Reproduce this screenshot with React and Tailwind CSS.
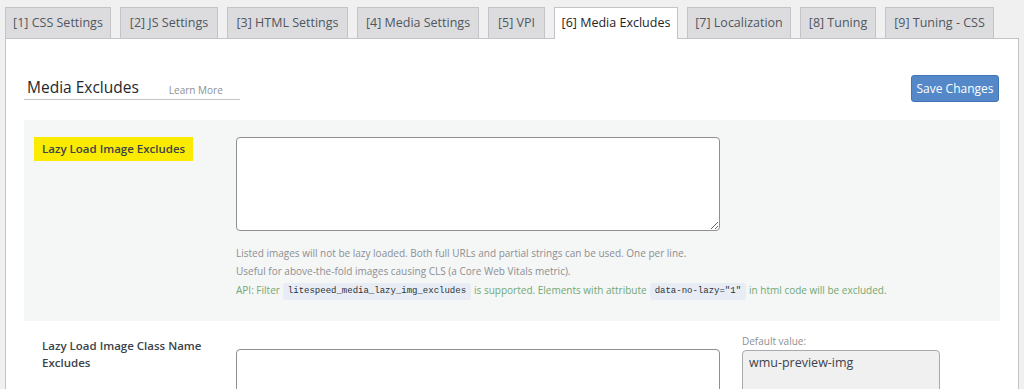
import React from "react";

const tabs = [
  { label: "[1] CSS Settings", w: "w-[106px]" },
  { label: "[2] JS Settings", w: "w-[98px]" },
  { label: "[3] HTML Settings", w: "w-[121px]" },
  { label: "[4] Media Settings", w: "w-[122px]" },
  { label: "[5] VPI", w: "w-[57px]" },
  { label: "[6] Media Excludes", w: "w-[124px]", active: true },
  { label: "[7] Localization", w: "w-[104px]" },
  { label: "[8] Tuning", w: "w-[76px]" },
  { label: "[9] Tuning - CSS", w: "w-[109px]" },
];

function Code({ children }) {
  return (
    <code className="mx-[3px] inline-block rounded-[3px] bg-[#e8edf5] px-[5px] py-[2px] align-middle font-['Liberation_Mono',monospace] text-[9px] leading-[13px] text-[#2c3338]">
      {children}
    </code>
  );
}

export default function App() {
  return (
    <div className="h-[389px] overflow-hidden bg-[#f0f0f1] px-[5px] pt-[7px] font-['Open_Sans',sans-serif]">
      <div className="flex items-end gap-[9px]">
        {tabs.map((t) =>
          t.active ? (
            <div
              key={t.label}
              className={`${t.w} relative z-10 mb-[-1px] flex h-[32px] items-center justify-center border border-b-0 border-[#c3c4c7] bg-white text-[12.5px] font-medium text-[#1d2327]`}
            >
              <span className="-mt-px">{t.label}</span>
            </div>
          ) : (
            <div
              key={t.label}
              className={`${t.w} flex h-[31px] items-center justify-center border border-b-0 border-[#c3c4c7] bg-[#dcdcde] text-[12.5px] text-[#50575e]`}
            >
              {t.label}
            </div>
          )
        )}
      </div>
      <div className="h-[400px] border border-[#c3c4c7] bg-white px-[18px]">
        <div className="flex items-start justify-between pt-[36px]">
          <div className="mt-[2px] flex h-[23px] w-[216px] items-center border-b border-[#c3c4c7] pl-[3px]">
            <span className="text-[15.5px] font-medium leading-none text-[#23282d]">
              Media Excludes
            </span>
            <span className="ml-[30px] mt-[3px] text-[10px] leading-none text-[#8c8f94]">
              Learn More
            </span>
          </div>
          <button className="mr-[1px] h-[27px] w-[88px] rounded-[3px] border border-[#3f74b5] bg-[#5588c9] text-[12px] text-white">
            Save Changes
          </button>
        </div>

        <div className="mt-[18px] flex bg-[#f5f6f6] pb-[21px]">
          <div className="w-[212px] shrink-0 pl-[10px] pt-[15px]">
            <span className="inline-block bg-[#fbeb00] px-[8px] py-[3px] text-[11.5px] font-semibold leading-[18px] text-[#3c434a]">
              Lazy Load Image Excludes
            </span>
          </div>
          <div className="pt-[17px]">
            <textarea
              readOnly
              className="block h-[94px] w-[484px] rounded-[4px] border border-[#8c8f94] bg-white"
            />
            <div className="mt-[13px] text-[10px] leading-[18px] text-[#8c8f94]">
              <p>
                Listed images will not be lazy loaded. Both full URLs and partial
                strings can be used. One per line.
              </p>
              <p>Useful for above-the-fold images causing CLS (a Core Web Vitals metric).</p>
              <p className="leading-[20px] text-[#73a873]">
                API: Filter<Code>litespeed_media_lazy_img_excludes</Code>is
                supported. Elements with attribute<Code>data-no-lazy="1"</Code>in
                html code will be excluded.
              </p>
            </div>
          </div>
        </div>

        <div className="flex">
          <div className="w-[212px] shrink-0 pl-[18px] pt-[16px]">
            <p className="w-[170px] text-[11.5px] font-semibold leading-[17px] text-[#3c434a]">
              Lazy Load Image Class Name Excludes
            </p>
          </div>
          <div className="pt-[28px]">
            <textarea
              readOnly
              className="block h-[94px] w-[484px] rounded-[4px] border border-[#8c8f94] bg-white"
            />
          </div>
          <div className="ml-[22px] pt-[13px]">
            <p className="text-[10px] leading-[14px] text-[#8c8f94]">Default value:</p>
            <div className="mt-[2px] h-[94px] w-[198px] rounded-[4px] border border-[#a7aaad] bg-[#f0f0f1] px-[6px] py-[3px] text-[12.5px] text-[#3c434a]">
              wmu-preview-img
            </div>
          </div>
        </div>
      </div>
    </div>
  );
}
